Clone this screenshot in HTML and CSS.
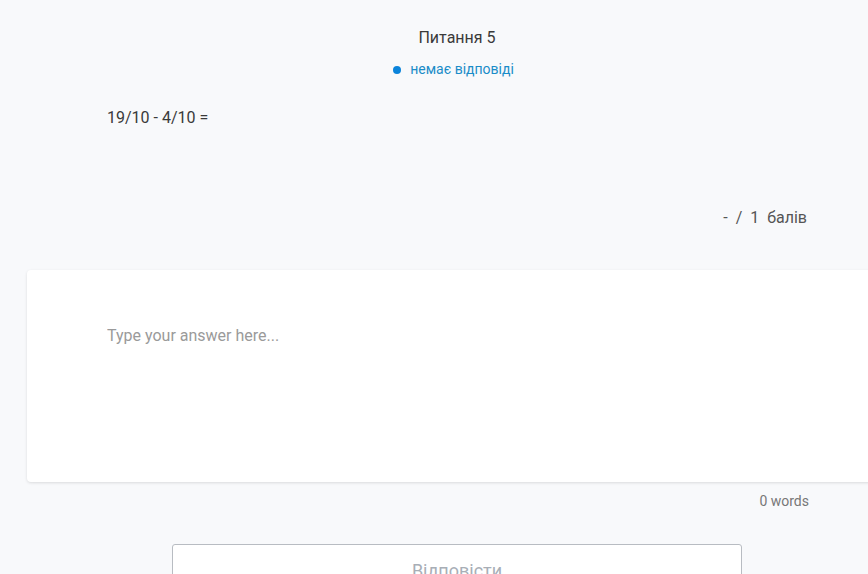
FILE: index.html
```html
<!DOCTYPE html>
<html lang="uk">

<head>
    <meta charset="UTF-8">
    <meta name="viewport" content="width=device-width, initial-scale=1.0">
    <title>Питання 5</title>
    <link rel="stylesheet" href="styles.css">
</head>

<body>
    <div class="question-page">
        <div class="question-head">
            <div class="question-title">Питання 5</div>
            <div class="question-status">
                <span class="status-dot"></span>
                <span>немає відповіді</span>
            </div>
        </div>

        <div class="question-body">
            <p class="question-text">19/10 - 4/10 =</p>
            <div class="question-points">-&nbsp; /&nbsp; 1&nbsp; балів</div>
        </div>

        <div class="answer-box">
            <textarea class="answer-input" placeholder="Type your answer here..."></textarea>
        </div>
        <div class="word-count">0 words</div>

        <div class="answer-actions">
            <button class="answer-btn" disabled>Відповісти</button>
        </div>
    </div>
</body>

</html>
```

FILE: styles.css
```css
* {
    box-sizing: border-box;
}

html,
body {
    margin: 0;
    overflow: hidden;
}

body {
    background-color: #f8f9fb;
    font-family: Roboto, "Noto Sans", sans-serif;
    color: #333;
}

.question-page {
    width: 860px;
    margin-left: 27px;
}

.question-head {
    padding-top: 28px;
    text-align: center;
}

.question-title {
    font-size: 16px;
    line-height: 19px;
    color: #3a3a3a;
}

.question-status {
    display: flex;
    justify-content: center;
    align-items: center;
    gap: 9px;
    margin-top: 14px;
    padding-right: 7px;
    font-size: 14px;
    line-height: 17px;
    color: #1a8cc8;
}

.status-dot {
    width: 8px;
    height: 8px;
    border-radius: 50%;
    background-color: #0b84db;
}

.question-body {
    padding: 0 80px;
}

.question-text {
    margin: 30px 0 0;
    font-size: 16px;
    line-height: 19px;
    color: #3a3a3a;
}

.question-points {
    margin-top: 81px;
    text-align: right;
    font-size: 16px;
    line-height: 19px;
    color: #555;
}

.answer-box {
    margin-top: 43px;
    height: 212px;
    background-color: #fff;
    border-radius: 4px;
    box-shadow: 0 1px 3px rgba(0, 0, 0, 0.12);
    padding: 56px 80px 0;
}

.answer-input {
    width: 100%;
    height: 120px;
    border: none;
    outline: none;
    resize: none;
    padding: 0;
    font-family: Roboto, "Noto Sans", sans-serif;
    font-size: 16px;
    line-height: 20px;
    color: #333;
    background: transparent;
}

.answer-input::placeholder {
    color: #9a9a9a;
}

.word-count {
    padding-right: 78px;
    margin-top: 11px;
    text-align: right;
    font-size: 14px;
    line-height: 17px;
    color: #777;
}

.answer-actions {
    display: flex;
    justify-content: center;
    margin-top: 34px;
}

.answer-btn {
    width: 570px;
    height: 52px;
    border: 1px solid #b8bcc2;
    border-radius: 3px;
    background-color: #fff;
    font-family: Roboto, "Noto Sans", sans-serif;
    font-size: 18px;
    color: #a8aeb6;
    padding: 0;
}
```
